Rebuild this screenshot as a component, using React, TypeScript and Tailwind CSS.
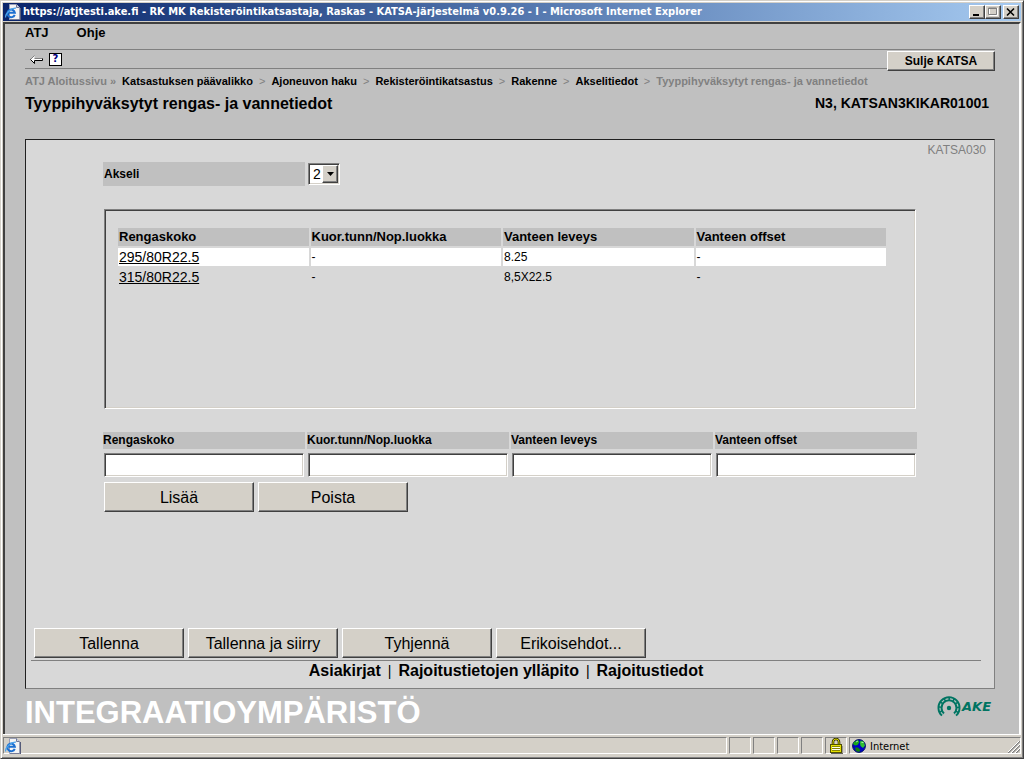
import { useState } from "react";

const raised =
  "border border-t-white border-l-white border-b-[#404040] border-r-[#404040] bg-[#d4d0c8] shadow-[inset_-1px_-1px_0_#808080]";
const sunken =
  "border border-t-[#808080] border-l-[#808080] border-b-white border-r-white shadow-[inset_1px_1px_0_#404040,inset_-1px_-1px_0_#d4d0c8]";
const statusCell = "border border-t-[#808080] border-l-[#808080] border-b-white border-r-white";

const columns = ["Rengaskoko", "Kuor.tunn/Nop.luokka", "Vanteen leveys", "Vanteen offset"];

const tyres = [
  { size: "295/80R22.5", load: "-", width: "8.25", offset: "-" },
  { size: "315/80R22.5", load: "-", width: "8,5X22.5", offset: "-" },
];

const crumbs = [
  "Katsastuksen päävalikko",
  "Ajoneuvon haku",
  "Rekisteröintikatsastus",
  "Rakenne",
  "Akselitiedot",
];

const IePageIcon = () => (
  <svg viewBox="0 0 16 16" className="size-4 shrink-0" aria-hidden="true">
    <path d="M4.500 .500h7l3 3v12h-10z" fill="#f4f4f4" stroke="#9aa0b8" />
    <path d="M11.500 .500v3h3" fill="#cdd4e8" stroke="#6f7896" />
    <path d="M15.500 4v12H5" fill="none" stroke="#555b78" />
    <path
      d="M9.700 10.800A3.800 3.800 0 1 1 9.900 8.800H3.600"
      fill="none"
      stroke="#1c6fd0"
      strokeWidth="2"
    />
    <path d="M.8 13.500C-.5 10.500 6 3.500 11 4.200" fill="none" stroke="#4aa3ec" strokeWidth="1.200" />
  </svg>
);

const BackIcon = () => (
  <svg viewBox="0 0 14 11" className="h-[11px] w-3.5" aria-hidden="true">
    <path d="M5.500 1.500 1.500 5.500l4 4v-3h8v-2h-8z" fill="#fff" />
    <path d="M5.500 1.500 1.500 5.500M5.500 4.500h8" fill="none" stroke="#808080" />
    <path d="M1.500 5.500l4 4v-3h8v-2" fill="none" stroke="#000" />
  </svg>
);

const LockIcon = () => (
  <svg viewBox="0 0 14 16" className="h-4 w-3.5" aria-hidden="true">
    <path d="M4 7V4a3 3 0 0 1 6 0v3" fill="none" stroke="#303000" strokeWidth="2.600" />
    <path d="M4 7V4a3 3 0 0 1 6 0v3" fill="none" stroke="#d8d400" />
    <rect x="1.500" y="6.500" width="11" height="8" fill="#e4e000" stroke="#505000" />
    <path d="M3 9.500h8M3 11.500h8" stroke="#fffff0" />
    <path d="M3 8.500h8M3 10.500h8M3 12.500h8" stroke="#8a8800" />
    <path d="M2 15.500h12V8" fill="none" stroke="#606060" />
  </svg>
);

const GlobeIcon = () => (
  <svg viewBox="0 0 14 14" className="size-3.5" aria-hidden="true">
    <circle cx="7" cy="7" r="6.400" fill="#0000c8" stroke="#001060" />
    <path d="M2 3 6 1l1.500 2L5.500 6 3 6.500 1 5z" fill="#18a818" />
    <path d="M8.500 1.500l3 1 1.500 4-2 2.500L8.500 7 8 4z" fill="#30c030" />
    <path d="M3 8.500h3l2.500 2.500L7 13l-3-1z" fill="#108010" />
    <path d="M4 3l2-1M9.500 3.500h2" stroke="#a0f0a0" />
  </svg>
);

const AkeLogo = () => (
  <svg viewBox="0 0 58 22" className="h-[22px] w-[58px]" role="img" aria-label="AKE">
    <path d="M6 18.500A9 9 0 1 1 18 18.500" fill="none" stroke="#007462" strokeWidth="5" />
    <path
      d="M6 18.500A9 9 0 1 1 18 18.500"
      fill="none"
      stroke="#b4c4c0"
      strokeWidth="1.200"
      strokeDasharray="3 1.500"
    />
    <circle cx="12" cy="12" r="2.200" fill="#007462" />
    <text
      x="25"
      y="15"
      fill="#007462"
      fontFamily="DejaVu Sans, sans-serif"
      fontSize="13"
      fontWeight="bold"
      fontStyle="italic"
    >
      AKE
    </text>
  </svg>
);

const TitleBar = () => (
  <header className="flex h-[18px] items-center gap-0.5 bg-linear-to-r from-[#0a246a] to-[#a6caf0] pl-0.5 pr-0.5">
    <IePageIcon />
    <h1 className="flex-1 truncate pt-px font-['DejaVu_Sans_Condensed','DejaVu_Sans',sans-serif] text-[11px] font-bold text-white">
      https://atjtesti.ake.fi - RK MK Rekisteröintikatsastaja, Raskas - KATSA-järjestelmä v0.9.26 - I - Microsoft
      Internet Explorer
    </h1>
    <div className="flex">
      <button aria-label="Minimize" className={`flex h-3.5 w-4 items-center justify-center ${raised}`}>
        <svg viewBox="0 0 12 10" className="h-2.5 w-3">
          <path d="M2 8h6" stroke="#000" strokeWidth="2" />
        </svg>
      </button>
      <button aria-label="Maximize" className={`flex h-3.5 w-4 items-center justify-center ${raised}`}>
        <svg viewBox="0 0 12 10" className="h-2.5 w-3">
          <path d="M2.500 1v7.500h8V1" fill="none" stroke="#fff" />
          <path d="M1.500 1h8v6.500h-8zM1 1.500h9" fill="none" stroke="#808080" />
        </svg>
      </button>
      <button aria-label="Close" className={`ml-0.5 flex h-3.5 w-4 items-center justify-center ${raised}`}>
        <svg viewBox="0 0 12 10" className="h-2.5 w-3">
          <path d="M2 1.500l7 7M9 1.500l-7 7" stroke="#000" strokeWidth="1.600" />
        </svg>
      </button>
    </div>
  </header>
);

const CommandButton = ({ label }: { label: string }) => (
  <button className={`h-[30px] w-[150px] pt-px text-base ${raised}`}>{label}</button>
);

const TyreTable = () => (
  <div className={`mx-[78px] mt-[23px] h-[200px] overflow-hidden pl-[11px] pr-[27px] pt-4 ${sunken}`}>
    <table className="w-full table-fixed border-separate border-spacing-x-0.5 border-spacing-y-0.5 text-left">
      <thead>
        <tr>
          {columns.map((c) => (
            <th key={c} className="h-[18px] bg-[#c0c0c0] px-px py-0 text-[13px] leading-[18px]">
              {c}
            </th>
          ))}
        </tr>
      </thead>
      <tbody>
        {tyres.map((t, i) => (
          <tr key={t.size} className={i === 0 ? "bg-white" : ""}>
            <td className="h-[18px] px-px py-0 text-sm leading-[18px]">
              <a href="#" className="underline">
                {t.size}
              </a>
            </td>
            <td className="px-px py-0 text-xs leading-[18px]">{t.load}</td>
            <td className="px-px py-0 text-xs leading-[18px]">{t.width}</td>
            <td className="px-px py-0 text-xs leading-[18px]">{t.offset}</td>
          </tr>
        ))}
      </tbody>
    </table>
  </div>
);

const StatusBar = () => (
  <footer className="flex h-[22px] gap-0.5 border-t border-white bg-[#d4d0c8] pb-0.5 pt-0.5">
    <div className={`flex flex-1 items-center pl-px ${statusCell}`}>
      <IePageIcon />
    </div>
    {[1, 2, 3, 4].map((n) => (
      <div key={n} className={`w-[22px] ${statusCell}`} />
    ))}
    <div className={`flex w-[22px] items-center justify-center ${statusCell}`}>
      <LockIcon />
    </div>
    <div className={`flex w-[172px] items-center gap-1 pl-0.5 ${statusCell}`}>
      <GlobeIcon />
      <span className="flex-1 pt-0.5 font-['DejaVu_Sans_Condensed','DejaVu_Sans',sans-serif] text-[11px] leading-4">
        Internet
      </span>
      <svg viewBox="0 0 12 12" className="size-3 self-end" aria-hidden="true">
        <path d="M0 12 12 0M4 12l8-8M8 12l4-4" stroke="#808080" strokeWidth="1.500" />
        <path d="M-1 12 11 0M3 12l9-9M7 12l5-5" stroke="#fff" />
      </svg>
    </div>
  </footer>
);

const App = () => {
  const [axle, setAxle] = useState("2");

  return (
    <div className="flex min-h-screen flex-col border border-b-[#404040] border-l-[#d4d0c8] border-r-[#404040] border-t-[#d4d0c8] bg-[#d4d0c8] p-0.5 font-['Liberation_Sans',Arial,sans-serif] text-black shadow-[inset_1px_1px_0_#fff,inset_-1px_-1px_0_#808080]">
      <TitleBar />
      <main className="mt-px flex flex-1 flex-col border-2 border-b-0 border-l-[#404040] border-r-white border-t-[#404040] bg-[#c0c0c0] pl-5 pr-6">
        <nav className="flex h-[25px] gap-7 pt-px text-[13px] font-bold leading-4">
          <a href="#">ATJ</a>
          <a href="#">Ohje</a>
        </nav>
        <div className="flex h-[22px] items-start border-t border-[#808080]">
          <div className="flex h-[19px] flex-1 items-center gap-1.5 border-b border-[#808080] pl-1">
            <button aria-label="Takaisin">
              <BackIcon />
            </button>
            <button className="flex size-[13px] items-center justify-center border border-black bg-white font-['DejaVu_Sans',sans-serif] text-[10px] font-bold leading-3 text-[#000080]">
              ?
            </button>
          </div>
          <button className={`mt-px h-5 w-[108px] text-xs font-bold ${raised}`}>Sulje KATSA</button>
        </div>
        <nav className="flex items-center gap-1.5 whitespace-nowrap pt-0.5 text-[11px] font-bold leading-4 text-[#808080]">
          <a href="#">ATJ Aloitussivu »</a>
          {crumbs.map((c) => (
            <span key={c} className="flex gap-1.5">
              <a href="#" className="text-black">
                {c}
              </a>
              <span className="font-normal">&gt;</span>
            </span>
          ))}
          <span>Tyyppihyväksytyt rengas- ja vannetiedot</span>
        </nav>
        <div className="flex items-start justify-between pr-1.5 pt-1 font-bold">
          <h2 className="pt-px text-base leading-5">Tyyppihyväksytyt rengas- ja vannetiedot</h2>
          <p className="text-sm leading-5">N3, KATSAN3KIKAR01001</p>
        </div>

        <section className="mt-[25px] flex flex-1 flex-col border border-b-[#808080] border-l-[#202020] border-r-[#808080] border-t-[#202020] bg-[#d8d8d8]">
          <p className="h-[22px] pr-2 pt-0.5 text-right text-xs leading-4 text-[#808080]">KATSA030</p>
          <div className="mx-[77px] flex items-center gap-[3px]">
            <label htmlFor="axle" className="h-6 w-[202px] bg-[#c0c0c0] pl-px text-xs font-bold leading-6">
              Akseli
            </label>
            <div className="relative">
              <select
                id="axle"
                value={axle}
                onChange={(e) => setAxle(e.target.value)}
                className={`block h-[22px] w-8 appearance-none bg-white pl-1 text-sm leading-4 ${sunken}`}
              >
                <option>1</option>
                <option>2</option>
                <option>3</option>
              </select>
              <span
                className={`pointer-events-none absolute right-0.5 top-0.5 flex h-[18px] w-4 items-center justify-center ${raised}`}
              >
                <svg viewBox="0 0 7 4" className="h-1 w-[7px]">
                  <path d="M0 0h7L3.500 4z" />
                </svg>
              </span>
            </div>
          </div>

          <TyreTable />

          <div className="mx-[77px] mt-[23px] grid grid-cols-4 gap-x-0.5">
            {columns.map((c) => (
              <div key={c}>
                <label htmlFor={c} className="block h-[17px] bg-[#c0c0c0] text-xs font-bold leading-[17px]">
                  {c}
                </label>
                <div className="px-px pt-1">
                  <input id={c} type="text" className={`block h-6 w-full bg-white px-1 text-sm ${sunken}`} />
                </div>
              </div>
            ))}
          </div>
          <div className="mx-[78px] mt-[5px] flex gap-1">
            <CommandButton label="Lisää" />
            <CommandButton label="Poista" />
          </div>

          <div className="mt-auto flex gap-1 pl-2">
            <CommandButton label="Tallenna" />
            <CommandButton label="Tallenna ja siirry" />
            <CommandButton label="Tyhjennä" />
            <CommandButton label="Erikoisehdot..." />
          </div>
          <div className="ml-[5px] mr-[13px] mt-0.5 flex h-7 justify-center gap-[7px] border-t border-[#808080] text-base leading-5">
            <a href="#" className="font-bold">
              Asiakirjat
            </a>
            <span className="text-sm leading-5">|</span>
            <a href="#" className="font-bold">
              Rajoitustietojen ylläpito
            </a>
            <span className="text-sm leading-5">|</span>
            <a href="#" className="font-bold">
              Rajoitustiedot
            </a>
          </div>
        </section>

        <div className="flex h-[45px] items-start justify-between">
          <p className="pt-1 text-[31px] font-bold leading-10 text-white">INTEGRAATIOYMPÄRISTÖ</p>
          <div className="pt-[7px]">
            <AkeLogo />
          </div>
        </div>
      </main>
      <StatusBar />
    </div>
  );
};

export default App;
